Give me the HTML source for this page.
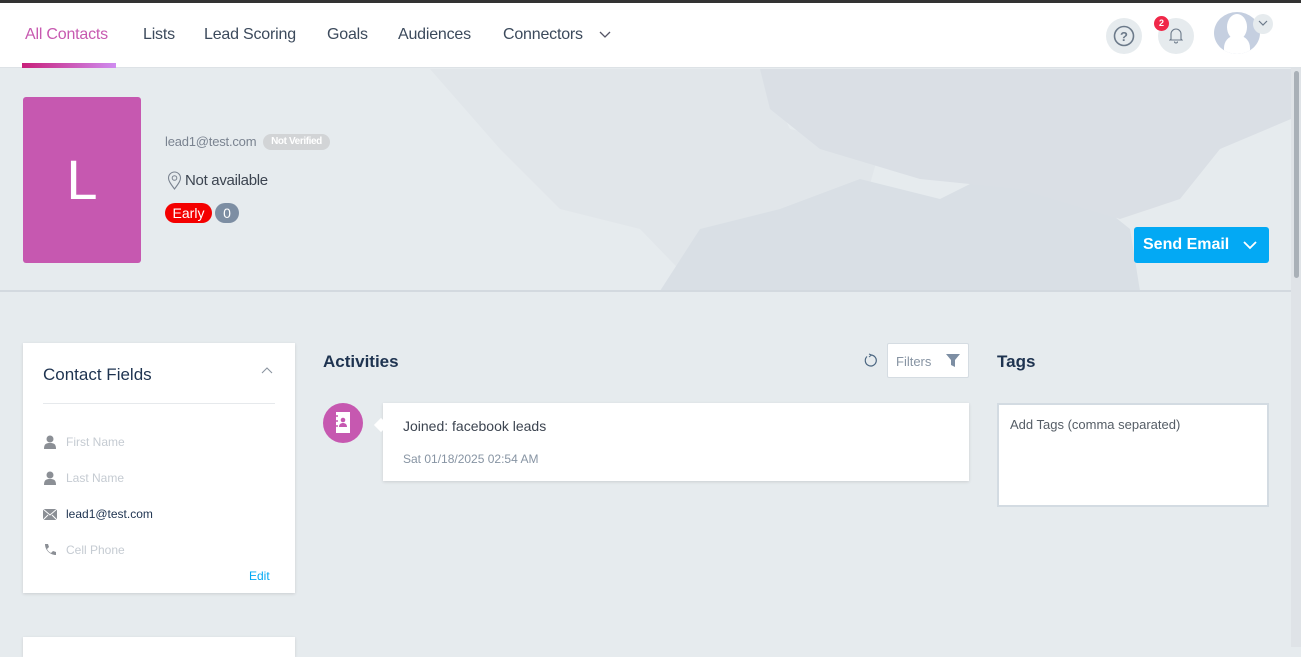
<!DOCTYPE html>
<html><head><meta charset="utf-8"><style>
*{margin:0;padding:0;box-sizing:border-box}
body{width:1301px;height:647px;overflow:hidden;background:#e6ebee;font-family:"Liberation Sans",sans-serif;position:relative}
.abs{position:absolute}
.top{left:0;top:0;width:1301px;height:3px;background:#333}
.hdr{left:0;top:3px;width:1301px;height:65px;background:#fff;border-bottom:1px solid #dde2e6}
.nav{top:26px;font-size:16px;color:#3c4a5c;letter-spacing:-0.2px}
.card{background:#fff;box-shadow:0 1px 3px rgba(0,0,0,.12)}
.fl{font-size:12px;color:#c5cbd2;left:66px}
.ic{left:43px;width:14px;height:14px}
</style></head><body>
<div class="abs top"></div>
<div class="abs hdr"></div>
<div class="abs nav" style="left:25px;color:#c759b0">All Contacts</div>
<div class="abs" style="left:22px;top:63px;width:94px;height:5px;background:linear-gradient(90deg,#c8207a,#cf8cf0)"></div>
<div class="abs nav" style="left:143px">Lists</div>
<div class="abs nav" style="left:204px">Lead Scoring</div>
<div class="abs nav" style="left:327px">Goals</div>
<div class="abs nav" style="left:398px">Audiences</div>
<div class="abs nav" style="left:503px">Connectors</div>
<svg class="abs" style="left:599px;top:31px" width="12" height="8"><path d="M1 1l5 5 5-5" stroke="#556" fill="none" stroke-width="1.3"/></svg>
<div class="abs" style="left:1106px;top:18px;width:36px;height:36px;border-radius:50%;background:#e6ebee"></div>
<svg class="abs" style="left:1113px;top:25px" width="22" height="22"><circle cx="11" cy="11" r="9.5" stroke="#6c7a8a" stroke-width="1.6" fill="none"/><text x="11" y="16" font-size="13" font-family="Liberation Sans" fill="#6c7a8a" text-anchor="middle" font-weight="bold">?</text></svg>
<div class="abs" style="left:1158px;top:18px;width:36px;height:36px;border-radius:50%;background:#e6ebee"></div>
<svg class="abs" style="left:1169px;top:27px" width="14" height="17"><path d="M2 12V7a5 5 0 0110 0v5l1 1H1z M5.5 14.5a1.5 1.5 0 003 0" stroke="#6c7a8a" fill="none" stroke-width="1.1"/></svg>
<div class="abs" style="left:1154px;top:16px;width:15px;height:15px;border-radius:50%;background:#f02849;color:#fff;font-size:9px;font-weight:bold;text-align:center;line-height:15px">2</div>
<div class="abs" style="left:1214px;top:12px;width:46px;height:42px;border-radius:50%;background:#c5cfe0;overflow:hidden"><div style="position:absolute;left:13px;top:2px;width:20px;height:26px;border-radius:50%;background:#fff"></div><div style="position:absolute;left:10px;top:24px;width:26px;height:30px;border-radius:40%;background:#fff"></div></div>
<div class="abs" style="left:1253px;top:14px;width:20px;height:20px;border-radius:50%;background:#e6ebee"></div>
<svg class="abs" style="left:1258px;top:20px" width="10" height="7"><path d="M1 1l4 4 4-4" stroke="#6c7a8a" fill="none" stroke-width="1.2"/></svg>
<!-- map -->
<svg class="abs" style="left:0;top:69px" width="1291" height="222">
<path d="M430 0 L760 0 L790 60 L880 80 L860 150 L880 222 L700 222 L640 160 L560 140 L500 80Z" fill="#e1e6ea"/>
<path d="M660 222 L700 160 L780 140 L860 110 L940 130 L1000 100 L1080 120 L1130 160 L1140 222Z" fill="#d9dfe5"/>
<path d="M760 0 L1291 0 L1291 50 L1220 80 L1180 130 L1120 150 L1020 120 L920 110 L820 80 L770 40Z" fill="#dadfe5"/>
</svg>
<div class="abs" style="left:0;top:290px;width:1291px;height:2px;background:#d3d9df"></div>
<div class="abs" style="left:1291px;top:68px;width:10px;height:579px;background:#dfe3e7"></div>
<div class="abs" style="left:1294px;top:71px;width:5px;height:207px;background:#a9b0b7;border-radius:3px"></div>
<!-- profile -->
<div class="abs" style="left:23px;top:97px;width:118px;height:166px;background:#c658b0;border-radius:3px;color:#fff;font-size:56px;text-align:center;line-height:166px;font-weight:300">L</div>
<div class="abs" style="left:165px;top:134px;font-size:13px;color:#7a8390;letter-spacing:-0.2px">lead1@test.com</div>
<div class="abs" style="left:263px;top:134px;width:67px;height:16px;border-radius:8px;background:#d2d4d6;color:#fff;font-size:10px;text-align:center;line-height:16px;font-weight:bold;letter-spacing:-0.4px">Not Verified</div>
<svg class="abs" style="left:167px;top:171px" width="15" height="20"><path d="M7.5 18C3 12 1.5 9.5 1.5 7a6 6 0 0112 0c0 2.5-1.5 5-6 11z" stroke="#7a8390" fill="none" stroke-width="1.1"/><circle cx="7.5" cy="7" r="2.3" stroke="#7a8390" fill="none"/></svg>
<div class="abs" style="left:185px;top:172px;font-size:15px;color:#3c4450;letter-spacing:-0.3px">Not available</div>
<div class="abs" style="left:165px;top:203px;width:47px;height:20px;border-radius:10px;background:#f40000;color:#fff;font-size:14px;text-align:center;line-height:20px">Early</div>
<div class="abs" style="left:215px;top:203px;width:24px;height:20px;border-radius:10px;background:#7d8ea3;color:#fff;font-size:14px;text-align:center;line-height:20px">0</div>
<div class="abs" style="left:1134px;top:227px;width:135px;height:36px;background:#03a9f4;border-radius:3px;color:#fff;font-size:16px;line-height:36px;padding-left:9px;font-weight:bold">Send Email</div>
<svg class="abs" style="left:1243px;top:241px" width="14" height="9"><path d="M1 1l6 6 6-6" stroke="#fff" fill="none" stroke-width="1.8"/></svg>
<!-- contact fields -->
<div class="abs card" style="left:23px;top:343px;width:272px;height:250px"></div>
<div class="abs" style="left:43px;top:365px;font-size:17px;color:#1e3350">Contact Fields</div>
<svg class="abs" style="left:261px;top:367px" width="12" height="8"><path d="M1 6l5-5 5 5" stroke="#8a94a0" fill="none" stroke-width="1.1"/></svg>
<div class="abs" style="left:43px;top:403px;width:232px;height:1px;background:#e6e9ec"></div>
<svg class="abs ic" style="top:435px"><circle cx="7" cy="4" r="3.5" fill="#8b8f95"/><path d="M1 14c0-5 2-6 6-6s6 1 6 6z" fill="#8b8f95"/></svg>
<div class="abs fl" style="top:435px">First Name</div>
<svg class="abs ic" style="top:471px"><circle cx="7" cy="4" r="3.5" fill="#8b8f95"/><path d="M1 14c0-5 2-6 6-6s6 1 6 6z" fill="#8b8f95"/></svg>
<div class="abs fl" style="top:471px">Last Name</div>
<svg class="abs ic" style="top:508px"><path d="M0 1h14v11H0z" fill="#8b8f95"/><path d="M0 1l7 6 7-6M0 12l5-5M14 12l-5-5" stroke="#fff" fill="none"/></svg>
<div class="abs fl" style="top:507px;color:#1e3350">lead1@test.com</div>
<svg class="abs ic" style="top:543px"><path d="M2 1l3 0 1 3-2 2c1 2 2 3 4 4l2-2 3 1v3c-6 0-11-5-11-11z" fill="#8b8f95"/></svg>
<div class="abs fl" style="top:543px">Cell Phone</div>
<div class="abs" style="left:249px;top:569px;font-size:12px;color:#03a9f4">Edit</div>
<div class="abs card" style="left:23px;top:637px;width:272px;height:20px"></div>
<!-- activities -->
<div class="abs" style="left:323px;top:352px;font-size:17px;font-weight:bold;color:#1e3350">Activities</div>
<svg class="abs" style="left:863px;top:353px" width="15" height="15"><path d="M4 3.5A5.5 5.5 0 1 0 8 2" stroke="#4a6580" fill="none" stroke-width="1.2"/><path d="M6 1l2.5 1L6 4" stroke="#4a6580" fill="none" stroke-width="1"/></svg>
<div class="abs" style="left:887px;top:343px;width:82px;height:35px;background:#fff;border:1px solid #d5dce2;border-radius:2px"></div>
<div class="abs" style="left:896px;top:354px;font-size:13px;color:#8794a3">Filters</div>
<svg class="abs" style="left:946px;top:354px" width="14" height="13"><path d="M0 0h14l-5 6v7l-4-2V6z" fill="#7d8ea3"/></svg>
<div class="abs" style="left:323px;top:403px;width:40px;height:40px;border-radius:50%;background:#c658b0"></div>
<svg class="abs" style="left:333px;top:411px" width="20" height="24"><rect x="3" y="1" width="14" height="21" fill="#fff"/><circle cx="10" cy="9" r="2.3" fill="#c658b0"/><path d="M6 16c0-3 2-4 4-4s4 1 4 4z" fill="#c658b0"/><path d="M1 5h4M1 10h4M1 15h4" stroke="#c658b0" stroke-width="1.5"/></svg>
<div class="abs card" style="left:383px;top:403px;width:586px;height:78px"></div>
<div class="abs" style="left:376px;top:420px;width:10px;height:10px;background:#fff;transform:rotate(45deg)"></div>
<div class="abs" style="left:403px;top:418px;font-size:14px;color:#3c4450">Joined: facebook leads</div>
<div class="abs" style="left:403px;top:452px;font-size:12px;color:#8794a3">Sat 01/18/2025 02:54 AM</div>
<!-- tags -->
<div class="abs" style="left:997px;top:352px;font-size:17px;font-weight:bold;color:#1e3350">Tags</div>
<div class="abs" style="left:997px;top:403px;width:272px;height:104px;background:#fff;border:2px solid #d3dbe2"></div>
<div class="abs" style="left:1010px;top:417px;font-size:13px;color:#555d66">Add Tags (comma separated)</div>
</body></html>
